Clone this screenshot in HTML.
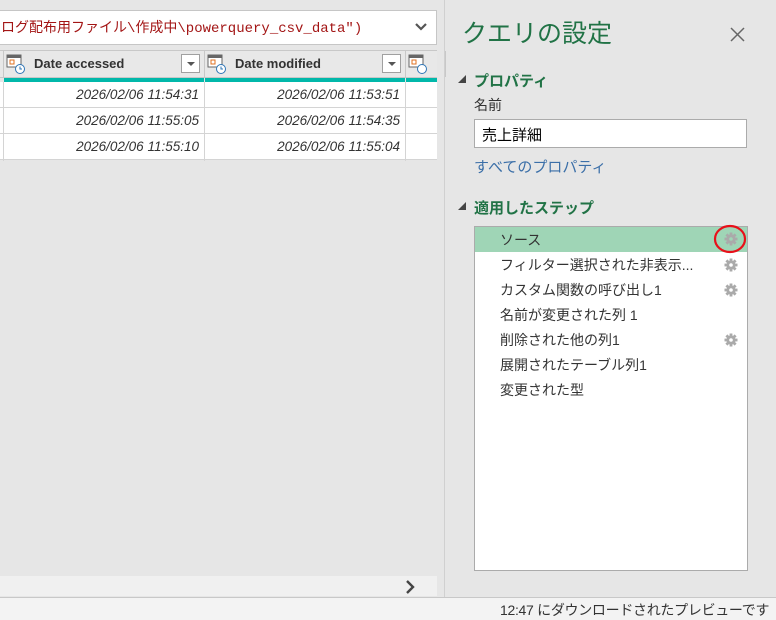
<!DOCTYPE html>
<html><head><meta charset="utf-8"><style>
*{margin:0;padding:0;box-sizing:border-box}
body{width:776px;height:620px;background:#e6e6e6;position:relative;overflow:hidden;font-family:"Liberation Sans","Noto Sans CJK JP",sans-serif}
.abs{position:absolute}
.fx{left:-2px;top:10px;width:439px;height:35px;background:#fff;border:1px solid #c6c6c6}
.fx span{position:absolute;left:2px;top:6px;font-family:"Liberation Mono","Noto Sans CJK JP",monospace;font-size:14px;color:#a31515;white-space:nowrap}
.hdr{top:50px;height:28px;background:#e8e8e8;border-top:1px solid #c8c8c8;border-bottom:1px solid #c8c8c8}
.col{position:absolute;top:0;height:26px;border-right:1px solid #c8c8c8}
.col b{position:absolute;left:30px;top:5px;font-size:13px;color:#333}
.dd{position:absolute;top:3px;width:19px;height:19px;border:1px solid #a0a0a0;background:#fff}
.dd:after{content:"";position:absolute;left:5px;top:7px;border:4px solid transparent;border-top:4px solid #555}
.teal{top:78px;height:4px;background:#01b8aa}
.row{left:0;width:437px;height:26px;background:#fff;border-bottom:1px solid #d4d4d4}
.row i{position:absolute;top:5px;font-size:13.5px;color:#333;text-align:right;width:190px}
.vl{top:82px;width:1px;height:79px;background:#d4d4d4}
.g{position:absolute;font-size:14px;color:#333}
.gear{position:absolute;right:9px;width:14px;height:14px}
</style></head><body>
<div class="abs fx"><span>ログ配布用ファイル\作成中\powerquery_csv_data")</span>
<svg class="abs" style="left:415px;top:11px" width="14" height="10"><path d="M2 2 L7 7 L12 2" stroke="#555" stroke-width="2.2" fill="none"/></svg></div>
<div class="abs hdr" style="left:0;width:437px">
 <div class="col" style="left:0;width:4px"></div>
 <div class="col" style="left:4px;width:201px">
  <svg class="abs" style="left:2px;top:3px" width="20" height="20"><rect x="1" y="1" width="14" height="12" fill="#fff" stroke="#666"/><rect x="1" y="1" width="14" height="3" fill="#666"/><rect x="4" y="6" width="4" height="4" fill="none" stroke="#e07020"/><circle cx="14" cy="15" r="4.5" fill="#fff" stroke="#2e75b6"/><path d="M14 12.5v2.5h2" stroke="#2e75b6" fill="none"/></svg>
  <b>Date accessed</b><div class="dd" style="left:177px"></div></div>
 <div class="col" style="left:205px;width:201px">
  <svg class="abs" style="left:2px;top:3px" width="20" height="20"><rect x="1" y="1" width="14" height="12" fill="#fff" stroke="#666"/><rect x="1" y="1" width="14" height="3" fill="#666"/><rect x="4" y="6" width="4" height="4" fill="none" stroke="#e07020"/><circle cx="14" cy="15" r="4.5" fill="#fff" stroke="#2e75b6"/><path d="M14 12.5v2.5h2" stroke="#2e75b6" fill="none"/></svg>
  <b>Date modified</b><div class="dd" style="left:177px"></div></div>
 <div class="col" style="left:406px;width:40px">
  <svg class="abs" style="left:2px;top:3px" width="20" height="20"><rect x="1" y="1" width="14" height="12" fill="#fff" stroke="#666"/><rect x="1" y="1" width="14" height="3" fill="#666"/><rect x="4" y="6" width="4" height="4" fill="none" stroke="#e07020"/><circle cx="14" cy="15" r="4.5" fill="#fff" stroke="#2e75b6"/></svg></div>
</div>
<div class="abs teal" style="left:4px;width:200px"></div>
<div class="abs teal" style="left:205px;width:200px"></div>
<div class="abs teal" style="left:406px;width:31px"></div>
<div class="abs row" style="top:82px"><i style="left:9px">2026/02/06 11:54:31</i><i style="left:210px">2026/02/06 11:53:51</i></div>
<div class="abs row" style="top:108px"><i style="left:9px">2026/02/06 11:55:05</i><i style="left:210px">2026/02/06 11:54:35</i></div>
<div class="abs row" style="top:134px"><i style="left:9px">2026/02/06 11:55:10</i><i style="left:210px">2026/02/06 11:55:04</i></div>
<div class="abs vl" style="left:3px"></div><div class="abs vl" style="left:204px"></div><div class="abs vl" style="left:405px"></div>
<div class="abs" style="left:0;top:576px;width:437px;height:20px;background:#f0f0f0"></div>
<svg class="abs" style="left:405px;top:580px" width="10" height="14"><path d="M2 1 L8 7 L2 13" stroke="#444" stroke-width="2.4" fill="none"/></svg>
<div class="abs" style="left:444px;top:0;width:1px;height:597px;background:#d0d0d0"></div>
<div class="abs" style="left:0;top:597px;width:776px;height:23px;background:#f3f3f3;border-top:1px solid #c8c8c8"></div>
<div class="abs" style="left:500px;top:600px;font-size:14px;color:#333;letter-spacing:-0.3px">12:47 にダウンロードされたプレビューです</div>
<div class="abs" style="left:462px;top:14px;font-size:25px;color:#217346">クエリの設定</div>
<svg class="abs" style="left:730px;top:27px" width="15" height="15"><path d="M1 1L14 14M14 1L1 14" stroke="#666" stroke-width="1.5"/></svg>
<div class="abs" style="left:458px;top:75px;border:4px solid transparent;border-bottom:4px solid #444;border-right:4px solid #444;width:0;height:0"></div>
<div class="abs" style="left:474px;top:70px;font-size:15px;font-weight:bold;color:#217346">プロパティ</div>
<div class="abs" style="left:474px;top:95px;font-size:14px;color:#333">名前</div>
<div class="abs" style="left:474px;top:119px;width:273px;height:29px;background:#fff;border:1px solid #ababab"><span style="position:absolute;left:7px;top:4px;font-size:15px;color:#000">売上詳細</span></div>
<div class="abs" style="left:474px;top:156px;font-size:15px;color:#3b6fa8">すべてのプロパティ</div>
<div class="abs" style="left:458px;top:202px;border:4px solid transparent;border-bottom:4px solid #444;border-right:4px solid #444;width:0;height:0"></div>
<div class="abs" style="left:474px;top:197px;font-size:15px;font-weight:bold;color:#217346">適用したステップ</div>
<div class="abs" style="left:474px;top:226px;width:274px;height:345px;background:#fff;border:1px solid #ababab">
 <div class="abs" style="left:0;top:0;width:272px;height:25px;background:#9fd5b6"></div>
 <div class="g" style="left:25px;top:3px">ソース</div>
 <div class="g" style="left:25px;top:28px">フィルター選択された非表示...</div>
 <div class="g" style="left:25px;top:53px">カスタム関数の呼び出し1</div>
 <div class="g" style="left:25px;top:78px">名前が変更された列 1</div>
 <div class="g" style="left:25px;top:103px">削除された他の列1</div>
 <div class="g" style="left:25px;top:128px">展開されたテーブル列1</div>
 <div class="g" style="left:25px;top:153px">変更された型</div>
 <svg class="gear" style="top:5px" viewBox="0 0 14 14"><g fill="#aaa"><circle cx="7" cy="7" r="4.6"/><rect x="5.6" y="0.5" width="2.8" height="13"/><rect x="0.5" y="5.6" width="13" height="2.8"/><rect x="5.6" y="0.5" width="2.8" height="13" transform="rotate(45 7 7)"/><rect x="5.6" y="0.5" width="2.8" height="13" transform="rotate(-45 7 7)"/></g><circle cx="7" cy="7" r="1.8" fill="#9fd5b6"/></svg>
 <svg class="gear" style="top:31px" viewBox="0 0 14 14"><g fill="#aaa"><circle cx="7" cy="7" r="4.6"/><rect x="5.6" y="0.5" width="2.8" height="13"/><rect x="0.5" y="5.6" width="13" height="2.8"/><rect x="5.6" y="0.5" width="2.8" height="13" transform="rotate(45 7 7)"/><rect x="5.6" y="0.5" width="2.8" height="13" transform="rotate(-45 7 7)"/></g><circle cx="7" cy="7" r="1.8" fill="#fff"/></svg>
 <svg class="gear" style="top:56px" viewBox="0 0 14 14"><g fill="#aaa"><circle cx="7" cy="7" r="4.6"/><rect x="5.6" y="0.5" width="2.8" height="13"/><rect x="0.5" y="5.6" width="13" height="2.8"/><rect x="5.6" y="0.5" width="2.8" height="13" transform="rotate(45 7 7)"/><rect x="5.6" y="0.5" width="2.8" height="13" transform="rotate(-45 7 7)"/></g><circle cx="7" cy="7" r="1.8" fill="#fff"/></svg>
 <svg class="gear" style="top:106px" viewBox="0 0 14 14"><g fill="#aaa"><circle cx="7" cy="7" r="4.6"/><rect x="5.6" y="0.5" width="2.8" height="13"/><rect x="0.5" y="5.6" width="13" height="2.8"/><rect x="5.6" y="0.5" width="2.8" height="13" transform="rotate(45 7 7)"/><rect x="5.6" y="0.5" width="2.8" height="13" transform="rotate(-45 7 7)"/></g><circle cx="7" cy="7" r="1.8" fill="#fff"/></svg>
</div>
<svg class="abs" style="left:713px;top:223px" width="34" height="32"><ellipse cx="17" cy="16" rx="15" ry="13" fill="none" stroke="#e8101a" stroke-width="2.2"/></svg>
</body></html>
